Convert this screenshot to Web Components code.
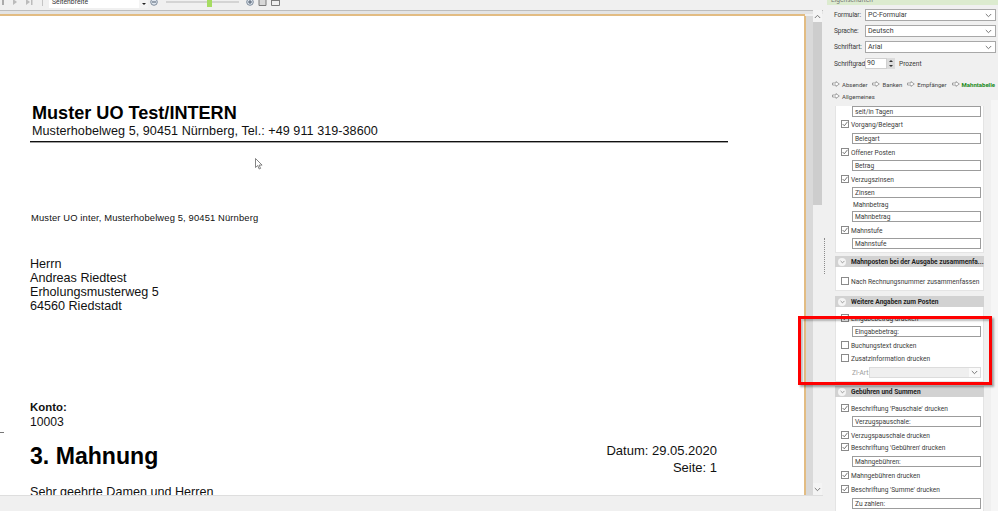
<!DOCTYPE html>
<html lang="de">
<head>
<meta charset="utf-8">
<title>Mahnung</title>
<style>
  html, body { margin: 0; padding: 0; height: 100%; overflow: hidden; background: #f0f0f0; }
  body { font-family: "Liberation Sans", Arial, sans-serif; }
</style>
</head>
<body>
<app-shell>
  <viewer-toolbar slot="viewer"></viewer-toolbar>
  <doc-view slot="viewer">
    <doc-page></doc-page>
  </doc-view>
  <status-bar slot="viewer"></status-bar>

  <side-panel slot="panel">
    <form-row label="Formular:" value="PC-Formular" top="4"></form-row>
    <form-row label="Sprache:" value="Deutsch" top="4"></form-row>
    <form-row label="Schriftart:" value="Arial" top="4"></form-row>
    <spin-row></spin-row>
    <nav-links></nav-links>

    <panel-card top="0">
      <text-field top="5">seit/in Tagen</text-field>
      <check-row checked top="1">Vorgang/Belegart</check-row>
      <text-field top="3">Belegart</text-field>
      <check-row checked top="2">Offener Posten</check-row>
      <text-field top="2">Betrag</text-field>
      <check-row checked top="2">Verzugszinsen</check-row>
      <text-field top="2">Zinsen</text-field>
      <plain-label>Mahnbetrag</plain-label>
      <text-field top="0">Mahnbetrag</text-field>
      <check-row checked top="2">Mahnstufe</check-row>
      <text-field top="2">Mahnstufe</text-field>
    </panel-card>

    <panel-card top="3" heading="Mahnposten bei der Ausgabe zusammenfa...">
      <check-row top="8">Nach Rechnungsnummer zusammenfassen</check-row>
    </panel-card>

    <panel-card top="5" heading="Weitere Angaben zum Posten">
      <check-row checked top="5">Eingabebetrag drucken</check-row>
      <text-field top="2">Eingabebetrag:</text-field>
      <check-row top="2">Buchungstext drucken</check-row>
      <check-row top="1">Zusatzinformation drucken</check-row>
      <combo-row top="3"></combo-row>
    </panel-card>

    <panel-card top="4" heading="Gebühren und Summen">
      <check-row checked top="5">Beschriftung 'Pauschale' drucken</check-row>
      <text-field top="2">Verzugspauschale:</text-field>
      <check-row checked top="2">Verzugspauschale drucken</check-row>
      <check-row checked top="0">Beschriftung 'Gebühren' drucken</check-row>
      <text-field top="3">Mahngebühren:</text-field>
      <check-row checked top="2">Mahngebühren drucken</check-row>
      <check-row checked top="2">Beschriftung 'Summe' drucken</check-row>
      <text-field top="3">Zu zahlen:</text-field>
    </panel-card>
  </side-panel>

  <red-frame slot="overlay"></red-frame>
</app-shell>

<script>
const CHEVRON = `<svg width="7" height="5" viewBox="0 0 7 5"><path d="M.8 1l2.7 2.7L6.2 1" fill="none" stroke="#777" stroke-width="1"/></svg>`;

function define(name, css, html, setup) {
  customElements.define(name, class extends HTMLElement {
    connectedCallback() {
      if (this.shadowRoot) return;
      this.attachShadow({ mode: "open" });
      const content = typeof html === "function" ? html(this) : html;
      this.shadowRoot.innerHTML = `<style>${css}</style>${content}`;
      if (this.hasAttribute("top")) this.style.marginTop = this.getAttribute("top") + "px";
      if (setup) setup(this);
    }
  });
}

define("app-shell", `
  :host { display: flex; width: 998px; height: 511px; overflow: hidden; position: relative; background: #f0f0f0; }
  .viewer { width: 823px; display: flex; flex-direction: column; flex: none; height: 511px; }
  .split { width: 3px; flex: none; display: flex; align-items: center; justify-content: center; }
  .split i { display: block; height: 36px; border-left: 1px dotted #8a8a8a; }
  .panel { flex: 1; min-width: 0; height: 511px; overflow: hidden; }
`, `
  <div class="viewer"><slot name="viewer"></slot></div>
  <div class="split"><i></i></div>
  <div class="panel"><slot name="panel"></slot></div>
  <slot name="overlay"></slot>
`);

define("viewer-toolbar", `
  :host { display: flex; flex: none; height: 10px; align-items: flex-end; overflow: hidden; background: #f0f0f0; padding-bottom: 4px; box-sizing: border-box; font: 6.8px Roboto, sans-serif; color: #333; }
  svg { display: block; flex: none; }
  .sep { width: 1px; height: 12px; background: #c4c4c4; margin: 0 6px 0 9px; flex: none; }
  .select { width: 90px; height: 12px; background: #fff; flex: none; box-sizing: border-box; padding: 0 0 2px 3px; line-height: 7px; white-space: nowrap; margin-bottom: -2px; display: flex; align-items: flex-end; }
  .arrow { width: 9px; height: 12px; background: #f4f4f4; flex: none; display: flex; align-items: flex-end; justify-content: center; padding-bottom: 3px; box-sizing: border-box; margin-bottom: -2px; }
  .arrow b { border: 2px solid transparent; border-top: 2.5px solid #222; border-bottom: 0; }
  .track { width: 73px; height: 2px; background: #d4d4d4; margin: 0 0 3px 0; position: relative; flex: none; }
  .thumb { position: absolute; left: 41px; bottom: -4px; width: 5px; height: 10px; background: #a6dc62; }
`, `
  <svg style="margin-left:1px" width="10" height="8" viewBox="0 0 10 8"><path d="M2 1v6" stroke="#666"/></svg>
  <svg style="margin-left:1px" width="6" height="8" viewBox="0 0 6 8"><path d="M1 1l4 3-4 3z" fill="#bbb"/></svg>
  <svg style="margin-left:8px" width="7" height="8" viewBox="0 0 7 8"><path d="M0 1l4 3-4 3z" fill="#bbb"/><path d="M5 1h1.5v6H5z" fill="#bbb"/></svg>
  <div class="sep"></div>
  <div class="select">Seitenbreite</div>
  <div class="arrow"><b></b></div>
  <svg style="margin-left:2px" width="8" height="8" viewBox="0 0 8 8"><circle cx="4" cy="4" r="3.3" fill="#dfe6ee" stroke="#7d8b9b"/><path d="M2 4h4" stroke="#4e5d6e"/></svg>
  <div style="width:8px;flex:none"></div>
  <div class="track"><div class="thumb"></div></div>
  <svg style="margin-left:7px" width="8" height="8" viewBox="0 0 8 8"><circle cx="4" cy="4" r="3.3" fill="#dfe6ee" stroke="#7d8b9b"/><path d="M2 4h4M4 2v4" stroke="#4e5d6e"/></svg>
  <svg style="margin-left:4px" width="9" height="8" viewBox="0 0 9 8"><path d="M1 .5h7v7H1z" fill="#d8d8d8" stroke="#7b7b7b"/></svg>
  <svg style="margin-left:4px" width="9" height="8" viewBox="0 0 9 8"><path d="M.5.5h8v7h-8z" fill="#eee" stroke="#7b7b7b"/><path d="M.5 2.5h8" stroke="#7b7b7b"/></svg>
`);

define("doc-view", `
  :host { display: flex; flex: 1; min-height: 0; flex-direction: column; }
  .line { height: 1px; background: #bdbdbd; flex: none; }
  .band { height: 3px; background: #e4e4e4; flex: none; }
  .orange { height: 2px; background: #e2bc83; flex: none; margin-right: 18px; }
  .body { flex: 1; min-height: 0; display: flex; }
  .page { width: 805px; flex: none; background: #fff; overflow: hidden; }
  .edge { width: 2px; background: #e2bc83; flex: none; margin-left: -1px; }
  .gutter { width: 7px; background: #d9d9d9; flex: none; }
  .scroll { width: 9px; flex: none; background: #f0f0f0; display: flex; flex-direction: column; align-items: center; margin-top: -6px; }
  .btn { height: 12px; width: 100%; display: flex; align-items: center; justify-content: center; background: #f4f4f4; flex: none; }
  .up svg { transform: rotate(180deg); }
  .thumb { width: 100%; height: 183px; background: #cdcdcd; flex: none; }
  .rest { flex: 1; }
`, `
  <div class="line"></div><div class="band"></div><div class="orange"></div>
  <div class="body">
    <div class="page"><slot></slot></div>
    <div class="edge"></div>
    <div class="gutter"></div>
    <div class="scroll">
      <div class="btn up">${CHEVRON}</div>
      <div class="thumb"></div>
      <div class="rest"></div>
      <div class="btn">${CHEVRON}</div>
    </div>
  </div>
`);

define("status-bar", `
  :host { display: block; flex: none; height: 16px; background: #f0f0f0; border-top: 1px solid #dedede; box-sizing: border-box; }
`, ``);

define("doc-page", `
  :host { display: block; position: relative; height: 490px; padding-left: 30px; color: #111; font-family: "Liberation Sans", Arial, sans-serif; font-size: 12.6px; line-height: 14.1px; overflow: hidden; }
  h1, h2, p { margin: 0; font-weight: normal; }
  .company { font-size: 18.1px; font-weight: bold; line-height: 21px; padding-top: 87px; margin-left: 2px; color: #000; }
  .address { margin-left: 2px; line-height: 15px; letter-spacing: .05px; }
  .rule { height: 1px; border-bottom: 1px solid #a0a0a0; width: 698px; background: #111; margin-top: 2px; }
  .sender { font-size: 9.4px; letter-spacing: .14px; line-height: 12px; margin: 68.5px 0 0 1px; }
  .recipient { margin-top: 33px; }
  .konto { margin-top: 87.5px; font-weight: bold; font-size: 11.4px; line-height: 14px; }
  .num { font-size: 12.2px; line-height: 16px; }
  .head { display: flex; justify-content: space-between; width: 687px; }
  .head h2 { font-size: 23.1px; font-weight: bold; line-height: 28px; margin-top: 12px; color: #000; }
  .meta { text-align: right; font-size: 13px; line-height: 17px; margin-top: 12px; }
  .greet { margin-top: 9px; }
  .tick { position: absolute; left: 0; top: 416px; width: 4px; height: 1px; background: #777; }
  svg { position: absolute; left: 255px; top: 142px; }
`, `
  <div class="tick"></div>
  <svg width="9" height="12" viewBox="0 0 9 12"><path d="M.5.5v9l2.2-2 1.5 3.5 1.4-.6-1.5-3.3h3z" fill="#fff" stroke="#666" stroke-width=".8"/></svg>
  <h1 class="company">Muster UO Test/INTERN</h1>
  <p class="address">Musterhobelweg 5, 90451 Nürnberg, Tel.: +49 911 319-38600</p>
  <div class="rule"></div>
  <p class="sender">Muster UO inter, Musterhobelweg 5, 90451 Nürnberg</p>
  <div class="recipient">Herrn<br>Andreas Riedtest<br>Erholungsmusterweg 5<br>64560 Riedstadt</div>
  <p class="konto">Konto:</p>
  <p class="num">10003</p>
  <div class="head">
    <h2>3. Mahnung</h2>
    <div class="meta">Datum: 29.05.2020<br>Seite: 1</div>
  </div>
  <p class="greet">Sehr geehrte Damen und Herren</p>
`);

define("side-panel", `
  :host { display: block; height: 511px; background: #f0f0f0; font: 6.6px Roboto, Arial, sans-serif; color: #3a3a3a; overflow: hidden; position: relative; }
  .title { height: 5px; margin-left: 1px; background: #dcebcf; overflow: hidden; line-height: 1px; color: #777; padding-left: 4px; }
  .side { position: absolute; left: 165px; top: 100px; right: 0; bottom: 0; background: #f6f6f6; }
`, `<div class="side"></div><div class="title">Eigenschaften</div><slot></slot>`);

define("form-row", `
  :host { display: flex; align-items: center; height: 12px; margin-left: 8px; margin-right: 2px; }
  .label { width: 31px; flex: none; white-space: nowrap; letter-spacing: -.12px; }
  .box { flex: 1; height: 12px; box-sizing: border-box; background: #fff; border: 1px solid #a8a8a8; display: flex; align-items: center; justify-content: space-between; padding: 0 3px 0 2px; font-size: 7px; }
`, (el) => `
  <span class="label">${el.getAttribute("label")}</span>
  <div class="box"><span>${el.getAttribute("value")}</span>${CHEVRON}</div>
`);

define("spin-row", `
  :host { display: flex; align-items: center; height: 11px; margin: 5px 0 0 8px; }
  .label { width: 31px; flex: none; white-space: nowrap; letter-spacing: -.12px; }
  .input { width: 22px; height: 11px; background: #fff; border: 1px solid #d0d0d0; box-sizing: border-box; padding-left: 1px; line-height: 9px; font-size: 7px; }
  .spin { width: 8px; height: 11px; background: #dcdcdc; display: flex; flex-direction: column; justify-content: space-around; align-items: center; }
  .spin i { display: block; border: 2px solid transparent; border-top: 0; border-bottom: 2.5px solid #333; }
  .spin i + i { border-bottom: 0; border-top: 2.5px solid #333; }
  .unit { margin-left: 4px; }
`, `
  <span class="label">Schriftgrad:</span>
  <div class="input">90</div>
  <div class="spin"><i></i><i></i></div>
  <span class="unit">Prozent</span>
`);

define("nav-links", `
  :host { display: flex; flex-wrap: wrap; align-items: center; margin: 10px 0 0 6px; row-gap: 1px; white-space: nowrap; width: 200px; height: 22px; font-size: 6px; }
  a { display: flex; align-items: center; height: 10px; gap: 2px; margin-right: 5px; color: #444; text-decoration: none; }
  a.on { color: #1a8a1a; font-weight: bold; margin-right: 0; }
  svg { display: block; flex: none; }
  .break { flex-basis: 100%; height: 0; }
`, () => {
  const arrow = `<svg width="8" height="6" viewBox="0 0 8 6"><path d="M.5 2h3.5V.6L7.3 3 4 5.4V4H.5z" fill="#fff" stroke="#8a8a8a" stroke-width=".8"/></svg>`;
  const items = ["Absender", "Banken", "Empfänger", "Mahntabelle", "Allgemeines"];
  return items.map((t, i) =>
    `${i === 4 ? '<div class="break"></div>' : ""}<a class="${t === "Mahntabelle" ? "on" : ""}">${arrow}${t}</a>`
  ).join("");
});

define("panel-card", `
  :host { display: block; width: 149px; margin-left: 9px; background: #fff; box-sizing: border-box; border: 1px solid #e4e4e4; border-top: 0; padding-bottom: 3px; }
  .head { height: 11px; background: #d2d2d2; margin: 0 -1px; display: flex; align-items: center; font-weight: bold; color: #222; white-space: nowrap; overflow: hidden; }
  .dot { width: 8px; height: 8px; border-radius: 50%; background: #f4f4f4; margin: 0 5px 0 3px; flex: none; display: flex; align-items: center; justify-content: center; }
  .dot svg { width: 5px; height: 4px; }
`, (el) => {
  const h = el.getAttribute("heading");
  return `${h ? `<div class="head"><span class="dot">${CHEVRON}</span>${h}</div>` : ""}<slot></slot>`;
});

define("check-row", `
  :host { display: flex; align-items: center; height: 12px; margin-left: 5px; gap: 2px; white-space: nowrap; }
  svg { display: block; flex: none; }
  span { margin-top: 1px; }
`, (el) => `
  <svg width="8" height="8" viewBox="0 0 8 8"><rect x=".5" y=".5" width="7" height="7" fill="#fff" stroke="#8a8a8a"/>${el.hasAttribute("checked") ? '<path d="M1.6 4l1.7 1.8L6.5 1.8" fill="none" stroke="#666" stroke-width=".9"/>' : ""}</svg>
  <span><slot></slot></span>
`);

define("text-field", `
  :host { display: block; height: 11px; margin: 0 2px 0 16px; box-sizing: border-box; background: #fff; border: 1px solid #9c9c9c; padding-left: 2px; line-height: 10px; white-space: nowrap; overflow: hidden; }
`, `<slot></slot>`);

define("plain-label", `
  :host { display: block; height: 13px; line-height: 14px; margin-left: 17px; }
`, `<slot></slot>`);

define("combo-row", `
  :host { display: flex; align-items: center; height: 11px; margin: 0 2px 0 16px; color: #9a9a9a; white-space: nowrap; }
  span { width: 17px; flex: none; }
  .box { flex: 1; height: 11px; box-sizing: border-box; border: 1px solid #dcdcdc; background: #efefef; display: flex; justify-content: flex-end; align-items: center; }
  .chev { width: 11px; height: 9px; background: #fafafa; display: flex; align-items: center; justify-content: center; }
`, `<span>ZI-Art:</span><div class="box"><div class="chev">${CHEVRON}</div></div>`);

define("red-frame", `
  :host { position: absolute; left: 798px; top: 316px; width: 194px; height: 69px; box-sizing: border-box; border: 3px solid #f00; box-shadow: 2px 2px 2px rgba(0,0,0,.35), inset 2px 2px 2px rgba(0,0,0,.25); pointer-events: none; }
`, ``);
</script>
</body>
</html>
